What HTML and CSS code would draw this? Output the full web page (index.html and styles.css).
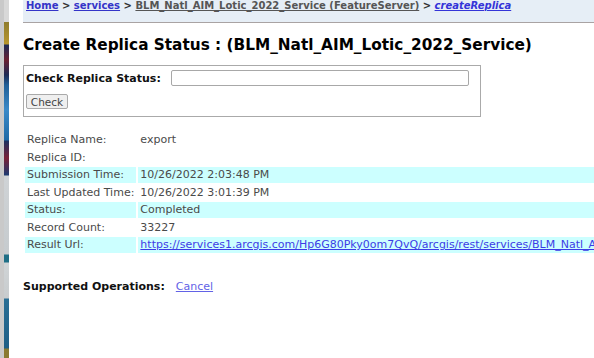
FILE: index.html
```html
<!DOCTYPE html>
<html>
<head>
<meta charset="utf-8">
<title>Create Replica Status</title>
<link rel="stylesheet" href="styles.css">
</head>
<body>
<div class="shell">
  <div class="strip"><div class="strip-grey"></div><div class="strip-img"></div></div>
  <div class="page">
    <div class="breadcrumbs">
      <a class="crumb" href="#">Home</a> &gt; <a class="crumb" href="#">services</a> &gt; <a class="crumb visited" href="#">BLM_Natl_AIM_Lotic_2022_Service (FeatureServer)</a> &gt; <a class="crumb current" href="#">createReplica</a>
    </div>
    <h2 class="title">Create Replica Status : (BLM_Natl_AIM_Lotic_2022_Service)</h2>
    <form class="check-box">
      <div class="check-row">
        <label class="check-label">Check Replica Status:</label>
        <input class="check-input" type="text">
      </div>
      <button class="check-btn" type="button">Check</button>
    </form>
    <table class="status">
      <tr><td class="lbl">Replica Name:</td><td class="val">export</td></tr>
      <tr><td class="lbl">Replica ID:</td><td class="val"></td></tr>
      <tr class="hl"><td class="lbl">Submission Time:</td><td class="val">10/26/2022 2:03:48 PM</td></tr>
      <tr><td class="lbl">Last Updated Time:</td><td class="val">10/26/2022 3:01:39 PM</td></tr>
      <tr class="hl"><td class="lbl">Status:</td><td class="val">Completed</td></tr>
      <tr><td class="lbl">Record Count:</td><td class="val">33227</td></tr>
      <tr class="hl"><td class="lbl">Result Url:</td><td class="val"><a class="url" href="#">https://services1.arcgis.com/Hp6G80Pky0om7QvQ/arcgis/rest/services/BLM_Natl_AIM_Lotic_2022_Service/FeatureServer/replicafiles/export.zip</a></td></tr>
    </table>
    <div class="ops"><span class="ops-label">Supported Operations:</span><a class="ops-link" href="#">Cancel</a></div>
  </div>
</div>
</body>
</html>
```
FILE: styles.css
```css
html, body {
  margin: 0;
  padding: 0;
  overflow: hidden;
  background: #ffffff;
}
body {
  font-family: "DejaVu Sans", Verdana, sans-serif;
  font-size: 11px;
  color: #000;
}
.shell {
  display: flex;
  width: 594px;
  height: 358px;
  overflow: hidden;
}
.strip {
  flex: 0 0 9px;
  display: flex;
  height: 358px;
}
.strip-grey {
  width: 4px;
  background: #c9c9c9;
}
.strip-img {
  width: 5px;
  background: linear-gradient(to bottom,
    #d8d8d8 0px, #d8d8d8 22px,
    #8f7c2c 22px, #b8962c 44px,
    #1d2b55 45px, #6a2030 60px, #1d2b55 75px,
    #1f5f97 85px, #3a8ac8 110px, #1e6aa6 140px,
    #1c3060 141px, #7a2036 158px, #1e3a70 175px,
    #cfd3d6 176px, #c6cbce 254px,
    #1f6f86 255px, #1f6f86 262px,
    #d0d4d6 263px, #c8ccce 298px,
    #2a6f95 299px, #1e5f86 348px,
    #8a7a30 349px, #8a7a30 358px);
}
.page {
  flex: 1 1 auto;
  min-width: 0;
  padding-left: 14px;
}
.breadcrumbs {
  background: #e6eef6;
  border-bottom: 1px solid #a9a3a3;
  font-weight: bold;
  font-size: 10px;
  line-height: 12px;
  height: 22px;
  padding-left: 3px;
  white-space: nowrap;
  color: #333;
}
.crumb {
  color: #3434c8;
  text-decoration: underline;
}
.crumb.visited {
  color: #555;
}
.crumb.current {
  font-style: italic;
  color: #3434d8;
}
.title {
  font-size: 15.3px;
  font-weight: bold;
  margin: 13px 0 0 0;
  line-height: 18px;
  white-space: nowrap;
}
.check-box {
  margin: 11px 0 0 0;
  width: 454px;
  height: 46px;
  border: 1px solid #aaaaaa;
  padding: 4px 0 0 2px;
  box-sizing: content-box;
}
.check-row {
  display: flex;
  align-items: center;
  gap: 10px;
}
.check-label {
  font-weight: bold;
  font-size: 11px;
  color: #111;
}
.check-input {
  width: 298px;
  height: 16px;
  box-sizing: border-box;
  border: 1px solid #a8a8a8;
  border-radius: 2px;
  padding: 0;
  margin: 0;
}
.check-btn {
  display: block;
  margin-top: 8px;
  width: 42px;
  height: 15px;
  font-family: "DejaVu Sans", Verdana, sans-serif;
  font-size: 10.5px;
  color: #444;
  background: #efefef;
  border: 1px solid #a9a9a9;
  border-radius: 2px;
  padding: 0;
  line-height: 12px;
}
.status {
  margin-top: 13px;
  margin-left: 0;
  border-collapse: separate;
  border-spacing: 2px;
  white-space: nowrap;
  color: #4a4a4a;
}
.status td {
  height: 15.5px;
  padding: 0 2px;
  line-height: 15.5px;
}
.status td.lbl {
  width: 108px;
}
.status tr.hl td {
  background: #ccffff;
}
.url {
  color: #3c3ce6;
  text-decoration: underline;
}
.ops {
  margin-top: 25px;
  white-space: nowrap;
}
.ops-label {
  font-weight: bold;
  color: #111;
  margin-right: 11px;
}
.ops-link {
  color: #6262e6;
  text-decoration: underline;
}
```
